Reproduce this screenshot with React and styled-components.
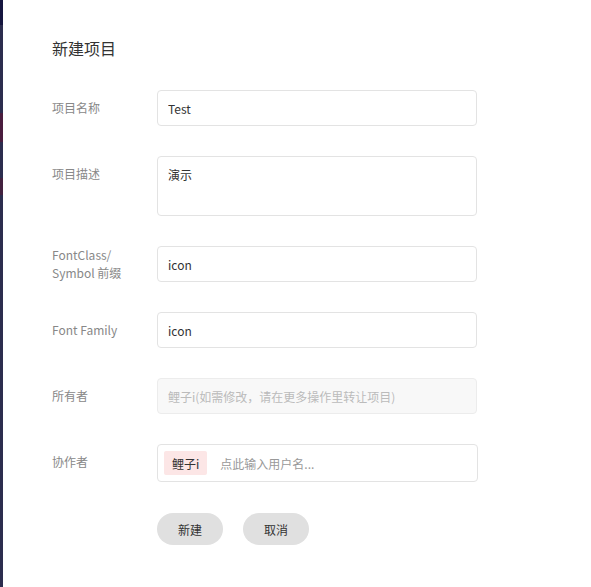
import React from 'react';
import styled, { createGlobalStyle } from 'styled-components';

const GlobalStyle = createGlobalStyle`
  html, body {
    margin: 0;
    padding: 0;
    background: #fff;
  }
  body {
    font-family: "Noto Sans CJK SC", "Noto Sans", sans-serif;
  }
  * {
    box-sizing: border-box;
  }
`;

const Backdrop = styled.div`
  display: flex;
  width: 591px;
  height: 587px;
  padding-left: 3px;
  background: linear-gradient(
    to bottom,
    #16163f 0,
    #16163f 25px,
    #2c2d4e 25px,
    #2c2d4e 113px,
    #4a1d3e 113px,
    #4a1d3e 142px,
    #2c2d4e 142px,
    #2c2d4e 178px,
    #43213f 178px,
    #43213f 195px,
    #2c2d4e 195px
  );
`;

const Panel = styled.div`
  flex: 1;
  background: #fff;
  padding: 36px 0 0 49px;
`;

const Title = styled.h2`
  margin: 0 0 30px;
  font-size: 16px;
  line-height: 24px;
  font-weight: 400;
  color: #333;
`;

const Form = styled.form`
  display: flex;
  flex-direction: column;
  gap: 30px;
`;

const Row = styled.div`
  display: flex;
  align-items: flex-start;
`;

const Label = styled.label`
  display: flex;
  align-items: center;
  width: 105px;
  height: 36px;
  font-size: 12px;
  line-height: 18px;
  color: #888;
`;

const Input = styled.input`
  width: 320px;
  height: 36px;
  padding: 0 10px;
  border: 1px solid #e3e3e3;
  border-radius: 4px;
  background: ${(p) => (p.disabled ? '#f8f8f8' : '#fff')};
  font-family: inherit;
  font-size: 12px;
  color: #333;
  outline: none;

  &:disabled {
    color: #bbb;
    border-color: #ececec;
  }
`;

const TextArea = styled.textarea`
  width: 320px;
  height: 60px;
  padding: 8px 10px;
  border: 1px solid #e3e3e3;
  border-radius: 4px;
  font-family: inherit;
  font-size: 12px;
  line-height: 20px;
  color: #333;
  resize: none;
  outline: none;
`;

const MemberBox = styled.div`
  display: flex;
  align-items: center;
  gap: 13px;
  width: 321px;
  height: 38px;
  padding: 0 6px;
  border: 1px solid #e3e3e3;
  border-radius: 4px;
`;

const Tag = styled.span`
  display: inline-flex;
  align-items: center;
  height: 24px;
  padding: 0 8px;
  border-radius: 2px;
  background: #fce6e6;
  font-size: 12px;
  color: #333;
`;

const MemberInput = styled.input`
  flex: 1;
  border: none;
  outline: none;
  padding: 0;
  font-family: inherit;
  font-size: 12px;
  color: #333;
  background: transparent;

  &::placeholder {
    color: #999;
  }
`;

const Actions = styled.div`
  display: flex;
  gap: 20px;
  margin: 1px 0 0 105px;
`;

const Button = styled.button`
  width: 66px;
  height: 32px;
  border: none;
  border-radius: 16px;
  background: #e0e0e0;
  font-family: inherit;
  font-size: 12px;
  color: #333;
  cursor: pointer;
`;

export default function App() {
  return (
    <>
      <GlobalStyle />
      <Backdrop>
        <Panel>
          <Title>新建项目</Title>
          <Form onSubmit={(e) => e.preventDefault()}>
            <Row>
              <Label>项目名称</Label>
              <Input defaultValue='Test' />
            </Row>
            <Row>
              <Label>项目描述</Label>
              <TextArea defaultValue='演示' />
            </Row>
            <Row>
              <Label>
                FontClass/
                <br />
                Symbol 前缀
              </Label>
              <Input defaultValue='icon' />
            </Row>
            <Row>
              <Label>Font Family</Label>
              <Input defaultValue='icon' />
            </Row>
            <Row>
              <Label>所有者</Label>
              <Input disabled defaultValue='鲤子i(如需修改，请在更多操作里转让项目)' />
            </Row>
            <Row>
              <Label>协作者</Label>
              <MemberBox>
                <Tag>鲤子i</Tag>
                <MemberInput placeholder='点此输入用户名...' />
              </MemberBox>
            </Row>
            <Actions>
              <Button type='submit'>新建</Button>
              <Button type='button'>取消</Button>
            </Actions>
          </Form>
        </Panel>
      </Backdrop>
    </>
  );
}
